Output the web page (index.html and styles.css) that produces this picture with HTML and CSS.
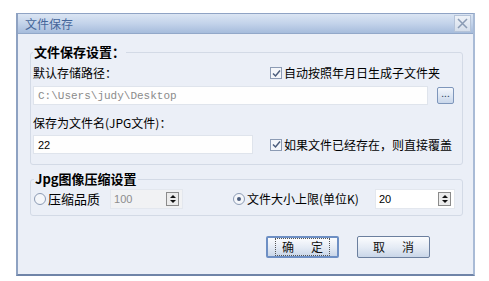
FILE: index.html
```html
<!DOCTYPE html>
<html lang="zh-CN">

<head>
    <meta charset="UTF-8" />
    <title>文件保存</title>
    <link rel="stylesheet" href="styles.css">
</head>

<body>
    <div class="dialog">
        <div class="titlebar">
            <span class="title">文件保存</span>
            <span class="close">
                <svg width="11" height="11" viewBox="0 0 11 11">
                    <path d="M1 1 L10 10 M10 1 L1 10" stroke="#8a9bb4" stroke-width="1.5" />
                </svg>
            </span>
        </div>
        <div class="content">
            <fieldset class="group first">
                <legend>文件保存设置：</legend>
                <div class="row label-row">
                    <span class="label">默认存储路径：</span>
                    <label class="check"><span class="box">
                            <svg width="9" height="9" viewBox="0 0 9 9">
                                <path d="M1 4.5 L3.5 7 L8 1.5" fill="none" stroke="#4b5d7c" stroke-width="1.5" />
                            </svg></span>自动按照年月日生成子文件夹</label>
                </div>
                <div class="row path-row">
                    <div class="input path">C:\Users\judy\Desktop</div>
                    <span class="browse">...</span>
                </div>
                <div class="row label-row second">
                    <span class="label">保存为文件名(JPG文件)：</span>
                </div>
                <div class="row name-row">
                    <div class="input name">22</div>
                    <label class="check"><span class="box">
                            <svg width="9" height="9" viewBox="0 0 9 9">
                                <path d="M1 4.5 L3.5 7 L8 1.5" fill="none" stroke="#4b5d7c" stroke-width="1.5" />
                            </svg></span>如果文件已经存在，则直接覆盖</label>
                </div>
            </fieldset>

            <fieldset class="group second-group">
                <legend>Jpg图像压缩设置</legend>
                <div class="row radios">
                    <label class="radio"><span class="dot"></span>压缩品质</label>
                    <div class="spin disabled">
                        <span class="spin-val">100</span>
                        <span class="arrows"><i class="up"></i><i class="down"></i></span>
                    </div>
                    <label class="radio on size"><span class="dot"></span>文件大小上限(单位K)</label>
                    <div class="spin wide">
                        <span class="spin-val">20</span>
                        <span class="arrows"><i class="up"></i><i class="down"></i></span>
                    </div>
                </div>
            </fieldset>

            <div class="buttons">
                <button class="btn default"><span class="cap"><span class="ch">确</span>定</span></button>
                <button class="btn"><span class="cap"><span class="ch">取</span>消</span></button>
            </div>
        </div>
    </div>
</body>

</html>
```

FILE: styles.css
```css
* {
    box-sizing: border-box;
}

body {
    margin: 0;
    background: #ffffff;
    font-family: "Noto Sans CJK SC", "Liberation Sans", sans-serif;
    font-size: 12px;
    line-height: 18px;
    color: #000;
    white-space: nowrap;
}

.dialog {
    margin: 13px 0 0 16px;
    width: 459px;
    height: 263px;
    border: 1px solid #8fa3c4;
    border-left: 2px solid #8ea2c2;
    border-bottom: 2px solid #6f84a8;
    border-right: 2px solid #a9bbd6;
    background: #ebeff7;
}

.titlebar {
    height: 20px;
    background: linear-gradient(#dbe5f3, #c3d3ea 50%, #a6bcdc);
    display: flex;
    align-items: center;
    justify-content: space-between;
    padding: 0 2px 0 7px;
    border-bottom: 1px solid #92a8c9;
}

.title {
    color: #45669a;
    font-size: 12px;
    line-height: 19px;
}

.close {
    width: 17px;
    height: 17px;
    border: 1px solid #b5c3d8;
    background: linear-gradient(#eef2f8, #d5deeb);
    display: flex;
    align-items: center;
    justify-content: center;
}

.content {
    padding: 10px 10px 0 12px;
}

.group {
    margin: 0;
    border: 1px solid #d3dae6;
    border-radius: 3px;
    padding: 4px 2px 10px 2px;
    min-width: 0;
}

.group legend {
    font-weight: bold;
    font-size: 13px;
    line-height: 16px;
    padding: 0 1px;
    color: #000;
}

.row {
    display: flex;
    align-items: center;
}

.label-row {
    justify-content: space-between;
    height: 18px;
}

.path-row {
    margin-top: 4px;
}

.label-row.second {
    margin-top: 9px;
}

.name-row {
    margin-top: 3px;
    justify-content: space-between;
}

.check {
    display: flex;
    align-items: center;
    width: 190px;
    gap: 2px;
}

.box {
    width: 12px;
    height: 12px;
    border: 1px solid #8c9bb4;
    background: #f4f6fa;
    display: flex;
    align-items: center;
    justify-content: center;
}

.input {
    height: 19px;
    border: 1px solid #dfe4ec;
    background: #fefefe;
    padding: 0 4px;
    display: flex;
    align-items: center;
}

.path {
    width: 395px;
    font-family: "Liberation Mono", monospace;
    font-size: 11px;
    color: #8b8b8b;
}

.name {
    width: 220px;
    font-family: "Liberation Sans", sans-serif;
    font-size: 11px;
}

.browse {
    margin-left: 9px;
    width: 17px;
    height: 17px;
    border: 1px solid #7e96bb;
    border-radius: 2px;
    background: linear-gradient(#f4f7fc, #c9d7eb);
    font-size: 10px;
    line-height: 10px;
    color: #2d3e5c;
    text-align: center;
}

.second-group {
    margin-top: 6px;
    padding: 2px 7px 6px 3px;
}

.radios {
    height: 20px;
    font-size: 13px;
}

.radio {
    display: flex;
    align-items: center;
    gap: 2px;
}

.radio.size {
    margin-left: 50px;
    font-size: 12px;
}

.dot {
    width: 12px;
    height: 12px;
    border: 1px solid #8c9bb4;
    border-radius: 50%;
    background: #f4f6fa;
    display: flex;
    align-items: center;
    justify-content: center;
}

.radio.on .dot::after {
    content: "";
    width: 4px;
    height: 4px;
    border-radius: 50%;
    background: #4b5d7c;
}

.spin {
    margin-left: 10px;
    width: 73px;
    height: 20px;
    border: 1px solid #e3e7ee;
    background: #ffffff;
    display: flex;
    align-items: center;
    justify-content: space-between;
    padding-left: 3px;
    font-family: "Liberation Sans", sans-serif;
    font-size: 11px;
    color: #000;
}

.spin.disabled {
    background: #f1f2f4;
    color: #8d8d8d;
}

.spin.wide {
    width: 80px;
    margin-left: auto;
}

.arrows {
    width: 13px;
    height: 14px;
    margin-right: 3px;
    border: 1px solid #8b8b8b;
    background: #ececec;
    display: flex;
    flex-direction: column;
    align-items: center;
    justify-content: center;
    gap: 2px;
}

.arrows i {
    width: 0;
    height: 0;
    border-left: 3px solid transparent;
    border-right: 3px solid transparent;
}

.arrows .up {
    border-bottom: 3px solid #111;
}

.arrows .down {
    border-top: 3px solid #111;
}

.buttons {
    display: flex;
    justify-content: flex-end;
    gap: 18px;
    margin-top: 20px;
    padding-right: 33px;
}

.btn {
    width: 73px;
    height: 22px;
    border: 1px solid #6b7f9e;
    border-radius: 2px;
    background: linear-gradient(#fbfcfe, #e3eaf4 55%, #c9d6e8);
    font-family: "Noto Sans CJK SC", sans-serif;
    font-size: 12px;
    line-height: 16px;
    color: #111;
    padding: 0;
}

.cap {
    display: inline-block;
    padding: 0 6px;
    border: 1px solid transparent;
}

.cap .ch {
    margin-right: 17px;
}

.btn.default {
    border: 2px solid #6d8fc4;
}

.btn.default .cap {
    border: 1px dotted #555;
}
```
